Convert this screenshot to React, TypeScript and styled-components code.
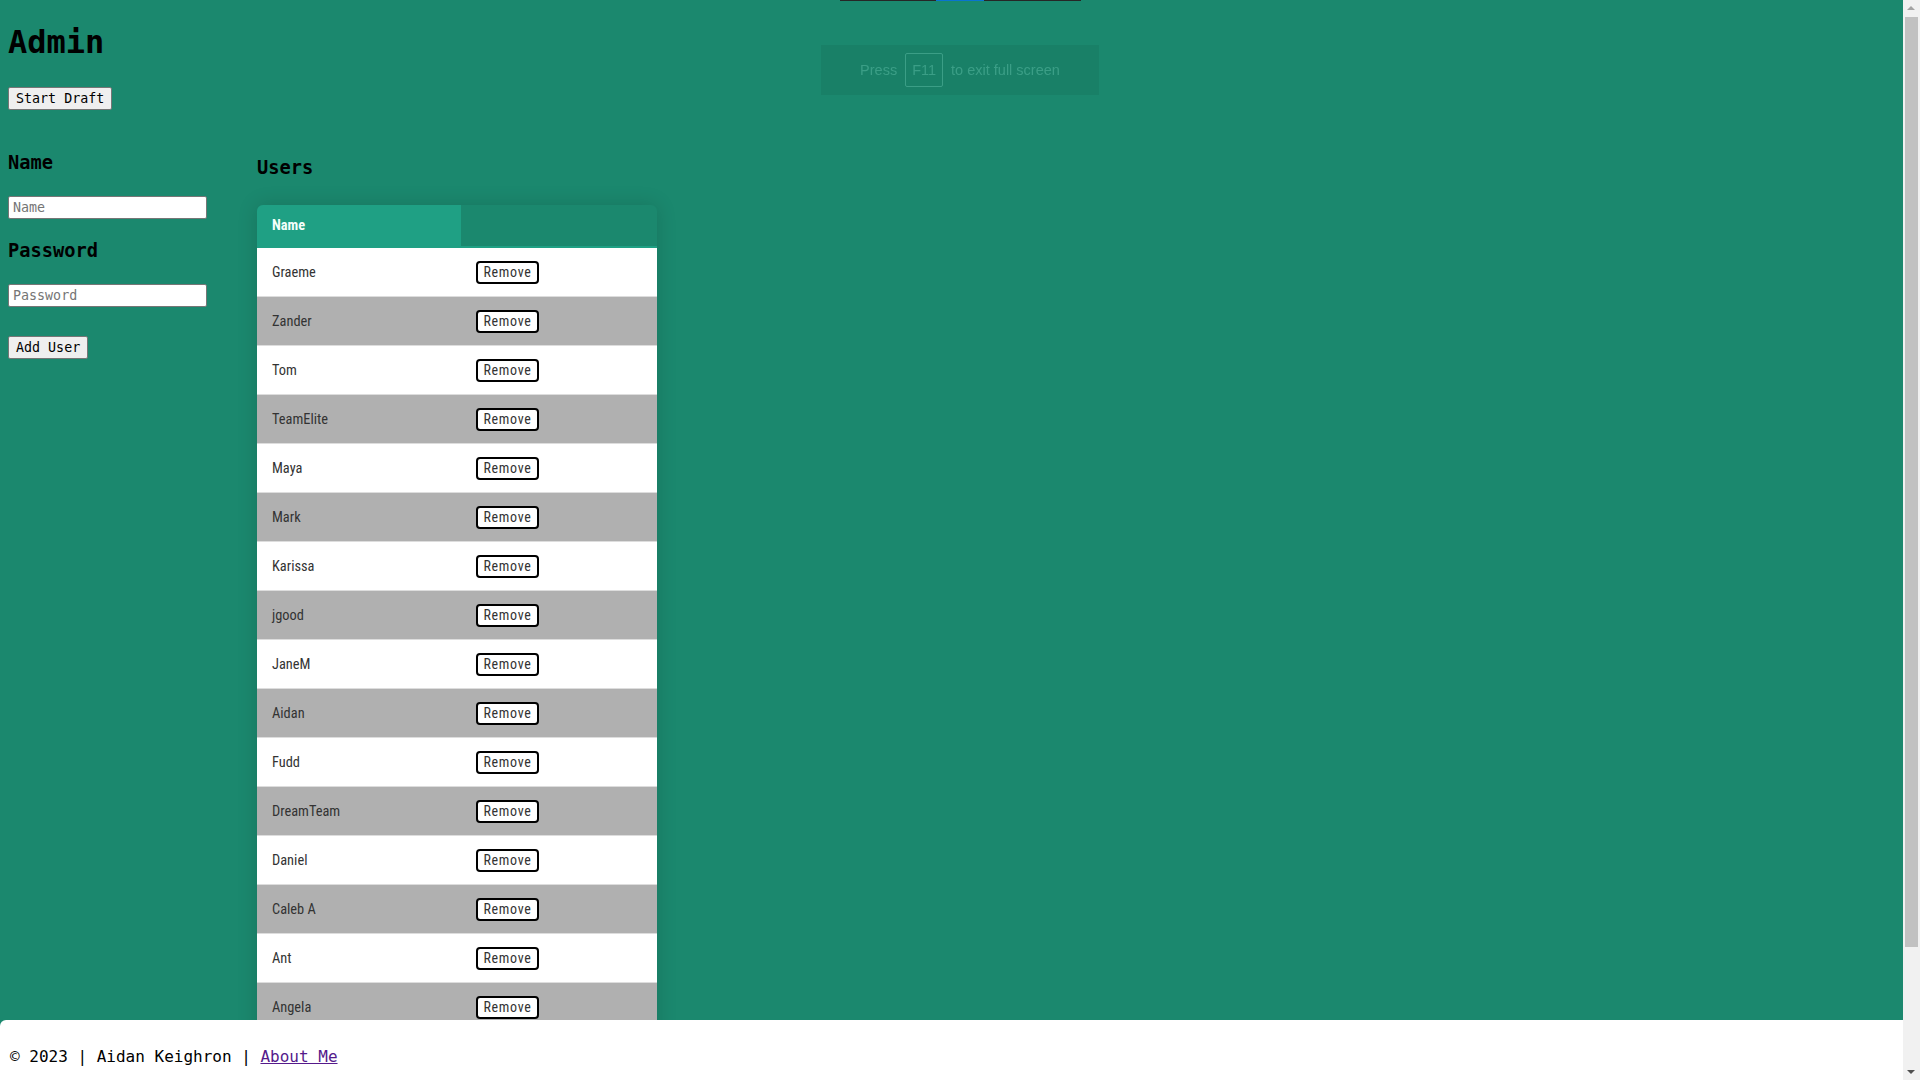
import React from "react";
import styled, { createGlobalStyle } from "styled-components";

const GlobalStyle = createGlobalStyle`
  html {
    background: #1b886e;
    scrollbar-width: none;
  }
  html::-webkit-scrollbar { display: none; }
  body {
    margin: 8px;
    background: #1b886e;
    font-family: "DejaVu Sans Mono", "Liberation Mono", monospace;
    font-size: 16px;
    color: #000;
  }
`;

const Page = styled.div`
  display: flex;
  flex-direction: column;
  padding-bottom: 25px;
`;

const Title = styled.h1`
  margin: 16px 0 26px;
  font-size: 32px;
  line-height: 37px;
  font-weight: bold;
`;

const PlainButton = styled.button<{ $mt?: number }>`
  align-self: flex-start;
  height: 23px;
  margin: ${(p) => p.$mt ?? 0}px 0 0;
  padding: 0 7px;
  font-family: "DejaVu Sans Mono", "Liberation Mono", monospace;
  font-size: 13.33px;
  color: #000;
  background: #efefef;
  border: 1px solid #767676;
  border-radius: 2px;
`;

const Columns = styled.div`
  display: grid;
  grid-template-columns: 249px 400px;
  margin-top: 22px;
  align-items: start;
`;

const FormColumn = styled.div`
  display: flex;
  flex-direction: column;
`;

const Label = styled.h3<{ $mt: number }>`
  margin: ${(p) => p.$mt}px 0 22px;
  font-size: 18.72px;
  line-height: 22px;
  font-weight: bold;
`;

const TextInput = styled.input`
  box-sizing: border-box;
  width: 199px;
  height: 23px;
  padding: 1px 4px;
  font-family: "DejaVu Sans Mono", "Liberation Mono", monospace;
  font-size: 13.33px;
  background: #fff;
  border: 1px solid #767676;
  border-radius: 2px;
  &::placeholder {
    color: #757575;
  }
`;

const UsersColumn = styled.div`
  display: flex;
  flex-direction: column;
`;

const SectionTitle = styled.h3`
  margin: 25px 0 26px;
  font-size: 18.72px;
  line-height: 22px;
  font-weight: bold;
`;

const TableCard = styled.div`
  width: 400px;
  border-radius: 6px 6px 0 0;
  overflow: hidden;
  box-shadow: 0 0 20px rgba(0, 0, 0, 0.15);
`;

const Table = styled.table`
  width: 400px;
  table-layout: fixed;
  border-collapse: separate;
  border-spacing: 0;
  font-family: "Roboto Condensed", "Liberation Sans Narrow", Roboto, sans-serif;
  font-size: 14.4px;
`;

const HeadCell = styled.th<{ $filled?: boolean }>`
  box-sizing: border-box;
  padding: 12px 15px;
  line-height: 17px;
  text-align: left;
  font-weight: bold;
  color: #f4fffb;
  background: ${(p) => (p.$filled ? "#1fa084" : "transparent")};
  border-bottom: 2px solid #1fa084;
`;

const Row = styled.tr<{ $shaded: boolean }>`
  background: ${(p) => (p.$shaded ? "#b0b0b0" : "#ffffff")};
`;

const Cell = styled.td`
  height: 48px;
  padding: 0 15px;
  vertical-align: middle;
  color: #333;
  border-bottom: 1px solid #dddddd;
`;

const RemoveButton = styled.button`
  width: 63px;
  height: 23px;
  padding: 0;
  font-family: "Roboto Condensed", "Liberation Sans Narrow", Roboto, sans-serif;
  font-size: 14px;
  letter-spacing: 0.7px;
  color: #333;
  background: #fff;
  border: 2px solid #000;
  border-radius: 4px;
  display: block;
`;

const Footer = styled.footer`
  position: fixed;
  left: 0;
  right: 0;
  bottom: 0;
  height: 60px;
  box-sizing: border-box;
  padding: 27px 10px 0;
  line-height: 19px;
  font-size: 16px;
  background: #fff;
  border-radius: 6px 6px 0 0;
`;

const FooterLink = styled.a`
  color: #551a8b;
  text-decoration: underline;
`;

const FullscreenHint = styled.div`
  position: fixed;
  top: 45px;
  left: 821px;
  width: 278px;
  height: 50px;
  display: flex;
  align-items: center;
  justify-content: center;
  gap: 8px;
  background: rgba(0, 0, 0, 0.06);
  font-family: "Liberation Sans", Arial, sans-serif;
  font-size: 14.5px;
  line-height: 16px;
  color: #3b9e86;
`;

const KeyCap = styled.span`
  display: flex;
  align-items: center;
  height: 34px;
  box-sizing: border-box;
  padding: 0 6px;
  border: 1px solid #3b9e86;
  border-radius: 2px;
`;

const TopBar = styled.div`
  position: fixed;
  top: 0;
  left: 840px;
  width: 241px;
  height: 1px;
  display: flex;
  background: #262626;
`;

const TopBarAccent = styled.div`
  margin-left: 96px;
  width: 48px;
  background: #0a74d0;
`;

const ScrollTrack = styled.div`
  position: fixed;
  top: 0;
  right: 0;
  bottom: 0;
  width: 17px;
  background: #f1f1f1;
`;

const ScrollThumb = styled.div`
  position: absolute;
  top: 17px;
  left: 2px;
  width: 13px;
  height: 930px;
  background: #c1c1c1;
`;

const Arrow = styled.div<{ $down?: boolean }>`
  position: absolute;
  left: 4px;
  width: 0;
  height: 0;
  border-left: 4px solid transparent;
  border-right: 4px solid transparent;
  ${(p) =>
    p.$down
      ? `bottom: 6px; border-top: 4px solid #505050;`
      : `top: 6px; border-bottom: 4px solid #a3a3a3;`}
`;

const users = [
  "Graeme",
  "Zander",
  "Tom",
  "TeamElite",
  "Maya",
  "Mark",
  "Karissa",
  "jgood",
  "JaneM",
  "Aidan",
  "Fudd",
  "DreamTeam",
  "Daniel",
  "Caleb A",
  "Ant",
  "Angela",
  "Alex",
  "Adam",
  "Abby",
];

export default function App() {
  return (
    <>
      <GlobalStyle />
      <Page>
        <Title>Admin</Title>
        <PlainButton>Start Draft</PlainButton>
        <Columns>
          <FormColumn>
            <Label $mt={20}>Name</Label>
            <TextInput placeholder="Name" />
            <Label $mt={21}>Password</Label>
            <TextInput placeholder="Password" type="password" />
            <PlainButton $mt={29}>Add User</PlainButton>
          </FormColumn>
          <UsersColumn>
            <SectionTitle>Users</SectionTitle>
            <TableCard>
              <Table>
                <colgroup>
                  <col style={{ width: 204 }} />
                  <col />
                </colgroup>
                <thead>
                  <tr>
                    <HeadCell $filled>Name</HeadCell>
                    <HeadCell />
                  </tr>
                </thead>
                <tbody>
                  {users.map((u, i) => (
                    <Row key={u} $shaded={i % 2 === 1}>
                      <Cell>{u}</Cell>
                      <Cell>
                        <RemoveButton>Remove</RemoveButton>
                      </Cell>
                    </Row>
                  ))}
                </tbody>
              </Table>
            </TableCard>
          </UsersColumn>
        </Columns>
      </Page>
      <Footer>
        © 2023 | Aidan Keighron | <FooterLink href="#">About Me</FooterLink>
      </Footer>
      <FullscreenHint>
        Press <KeyCap>F11</KeyCap> to exit full screen
      </FullscreenHint>
      <TopBar>
        <TopBarAccent />
      </TopBar>
      <ScrollTrack>
        <Arrow />
        <ScrollThumb />
        <Arrow $down />
      </ScrollTrack>
    </>
  );
}
